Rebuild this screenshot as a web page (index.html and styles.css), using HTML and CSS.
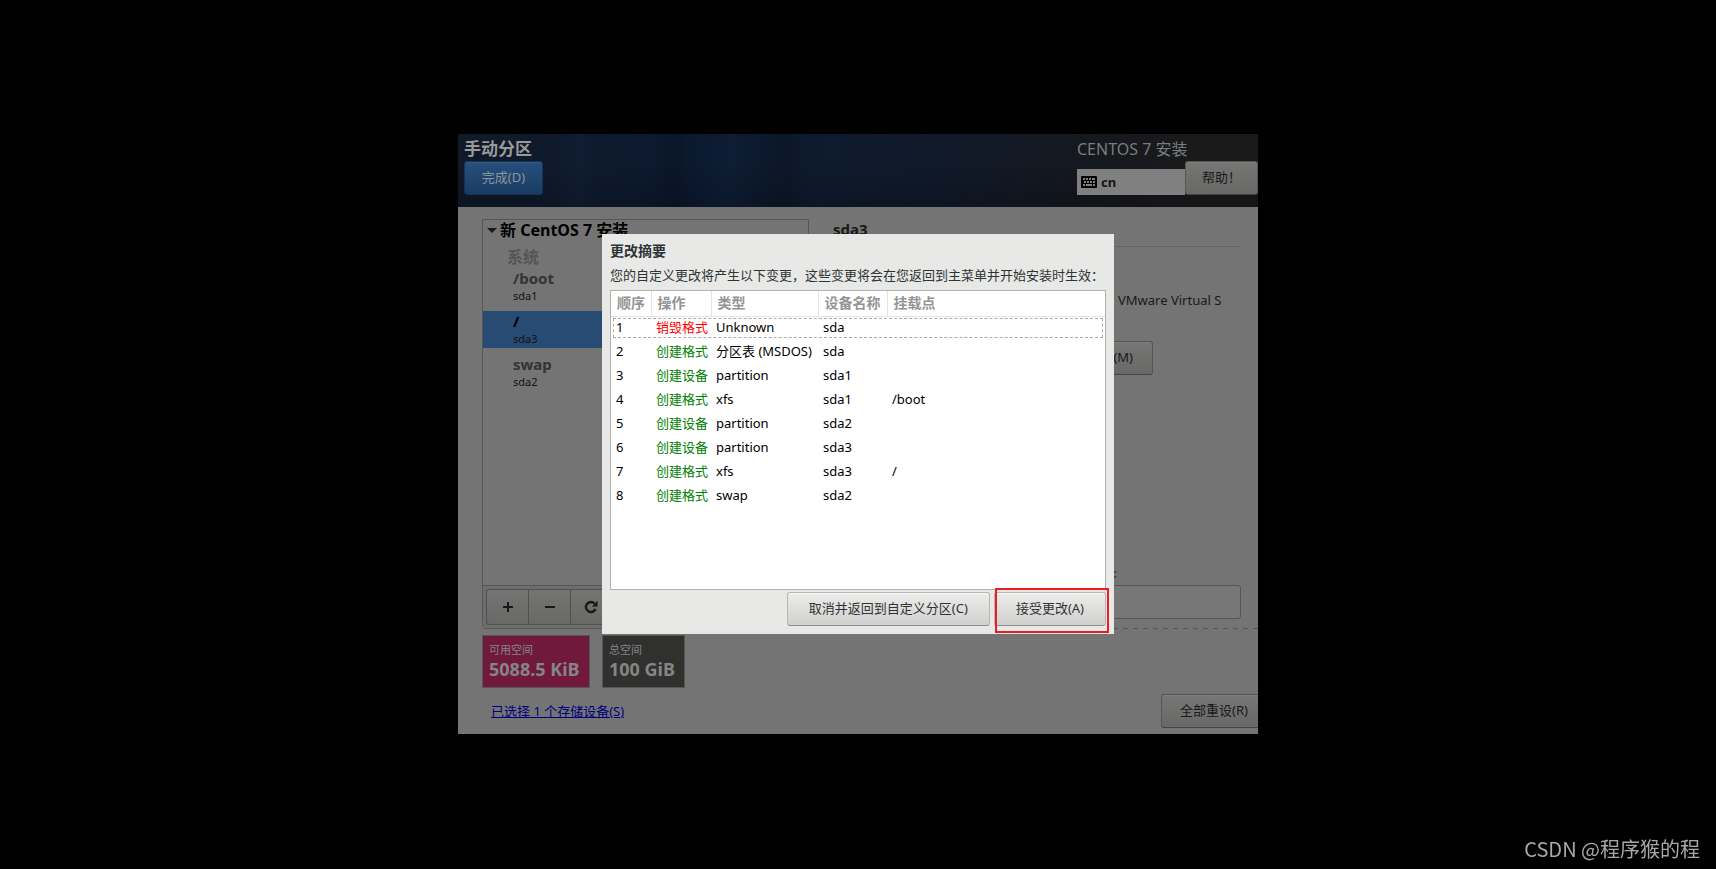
FILE: index.html
```html
<!DOCTYPE html>
<html lang="zh-CN">
<head>
<meta charset="utf-8">
<title>手动分区</title>
<link rel="stylesheet" href="styles.css">
</head>
<body>
<main class="screen">
  <header class="topbar">
    <div class="topbar-left">
      <h1 class="page-title">手动分区</h1>
      <button class="btn btn-primary" type="button">完成(D)</button>
    </div>
    <div class="topbar-right">
      <p class="product">CENTOS 7 安装</p>
      <div class="topbar-tools">
        <button class="layout-indicator" type="button">
          <svg width="16" height="12" viewBox="0 0 16 12" aria-hidden="true">
            <rect width="16" height="12" rx="1" fill="#000"/>
            <path d="M2 3h2M5 3h2M8 3h2M11 3h3M3 6h2M6 6h2M9 6h2M12 6h2M2 9h2M5 9h6M12 9h2" stroke="#808080" stroke-width="2"/>
          </svg>
          cn
        </button>
        <button class="btn btn-help" type="button">帮助！</button>
      </div>
    </div>
  </header>

  <div class="content">
    <div class="columns">
      <section class="mounts">
        <div class="mount-list">
          <h2 class="install-title"><span class="expander"></span>新 CentOS 7 安装</h2>
          <h3 class="group-title">系统</h3>
          <ul class="mount-items">
            <li class="mount"><span class="mount-path">/boot</span><span class="mount-dev">sda1</span></li>
            <li class="mount mount-selected"><span class="mount-path">/</span><span class="mount-dev">sda3</span></li>
            <li class="mount"><span class="mount-path">swap</span><span class="mount-dev">sda2</span></li>
          </ul>
        </div>
        <div class="toolbar">
          <button class="tool" type="button" aria-label="添加"><svg width="12" height="12" viewBox="0 0 12 12"><path d="M6 1v10M1 6h10" stroke="#151818" stroke-width="2"/></svg></button>
          <button class="tool" type="button" aria-label="删除"><svg width="12" height="12" viewBox="0 0 12 12"><path d="M1 6h10" stroke="#151818" stroke-width="2"/></svg></button>
          <button class="tool tool-last" type="button" aria-label="重新载入"><svg width="14" height="14" viewBox="0 0 14 14"><path d="M10.5 3.5A5 5 0 1 0 11.5 9" fill="none" stroke="#151818" stroke-width="2.4"/><path d="M13.5 .8V6.500H7.800z" fill="#151818"/></svg></button>
        </div>
      </section>

      <section class="details">
        <h2 class="detail-title">sda3</h2>
        <p class="device-name">VMware Virtual S</p>
        <button class="btn btn-dim btn-modify" type="button">修改...(M)</button>
        <label class="name-label" for="dev-name">名称(N):</label>
        <input class="name-input" id="dev-name" type="text">
      </section>
    </div>

    <div class="summary">
      <div class="space space-free"><span class="space-label">可用空间</span><strong class="space-value">5088.5 KiB</strong></div>
      <div class="space space-total"><span class="space-label">总空间</span><strong class="space-value">100 GiB</strong></div>
    </div>
    <footer class="footer">
      <a class="storage-link" href="#">已选择 1 个存储设备(S)</a>
      <button class="btn btn-dim btn-reset" type="button">全部重设(R)</button>
    </footer>
  </div>

  <div class="dialog" role="dialog" aria-labelledby="dialog-title">
    <h2 class="dialog-title" id="dialog-title">更改摘要</h2>
    <p class="dialog-text">您的自定义更改将产生以下变更，这些变更将会在您返回到主菜单并开始安装时生效：</p>
    <div class="table-frame">
      <table class="changes">
        <colgroup><col class="c-order"><col class="c-action"><col class="c-type"><col class="c-device"><col></colgroup>
        <thead><tr><th>顺序</th><th>操作</th><th>类型</th><th>设备名称</th><th>挂载点</th></tr></thead>
        <tbody>
          <tr class="focused"><td>1</td><td class="destroy">销毁格式</td><td>Unknown</td><td>sda</td><td></td></tr>
          <tr><td>2</td><td class="create">创建格式</td><td>分区表 (MSDOS)</td><td>sda</td><td></td></tr>
          <tr><td>3</td><td class="create">创建设备</td><td>partition</td><td>sda1</td><td></td></tr>
          <tr><td>4</td><td class="create">创建格式</td><td>xfs</td><td>sda1</td><td>/boot</td></tr>
          <tr><td>5</td><td class="create">创建设备</td><td>partition</td><td>sda2</td><td></td></tr>
          <tr><td>6</td><td class="create">创建设备</td><td>partition</td><td>sda3</td><td></td></tr>
          <tr><td>7</td><td class="create">创建格式</td><td>xfs</td><td>sda3</td><td>/</td></tr>
          <tr><td>8</td><td class="create">创建格式</td><td>swap</td><td>sda2</td><td></td></tr>
        </tbody>
      </table>
    </div>
    <div class="dialog-actions">
      <button class="btn btn-dialog" type="button">取消并返回到自定义分区(C)</button>
      <div class="marked"><button class="btn btn-dialog" type="button">接受更改(A)</button></div>
    </div>
  </div>
</main>
<p class="watermark">CSDN @程序猴的程</p>
</body>
</html>
```
FILE: styles.css
```css
* { box-sizing: border-box; }

body {
  margin: 0;
  padding-bottom: 1px;
  min-height: 100vh;
  display: grid;
  grid-template-columns: minmax(0, 800px);
  place-content: center;
  background: #000;
  color: #2e3436;
  font: 13px/20px "Noto Sans", "Noto Sans CJK SC", sans-serif;
}

h1, h2, h3, p, ul { margin: 0; padding: 0; }
ul { list-style: none; }
button, input { font: inherit; color: inherit; }

.screen {
  position: relative;
  min-height: 600px;
  overflow: hidden;
  display: flex;
  flex-direction: column;
  background: #747474;
}

.btn {
  height: 34px;
  padding: 0 18px 2px;
  border: 1px solid #b6b6b3;
  border-bottom-color: #8f8f8c;
  border-radius: 3px;
  background: linear-gradient(#ececeb, #d0d0ce);
  box-shadow: inset 0 1px #fafafa;
  white-space: nowrap;
}

.btn-dim, .btn-help {
  border-color: #565654;
  border-bottom-color: #444442;
  background: linear-gradient(#767675, #686866);
  box-shadow: inset 0 1px #7d7d7c;
  color: #171a1b;
}

/* Top bar */
.topbar {
  height: 73px;
  padding: 5px 0 0 6px;
  display: flex;
  justify-content: space-between;
  background:
    linear-gradient(90deg, #0000 12%, #16294633 15%, #0000 18% 24%, #00000026 27%, #0000 29%, #1a335522 34%, #0000 37%, #00000022 41%, #0000 44%),
    linear-gradient(#0000 40%, #0003),
    linear-gradient(90deg, #101a28, #0d1a2e 20%, #0b192f 30%, #0e1b2e 45%, #10192a 60%, #141820 75%, #1a1a1a 95%);
}
.page-title {
  height: 22px;
  font-size: 17px;
  line-height: 20px;
  color: #999;
}
.btn-primary {
  width: 79px;
  padding: 0 0 2px;
  border-color: #153453;
  background: linear-gradient(#27507e, #1a3c62);
  box-shadow: inset 0 1px #2f5c8b;
  color: #8e949b;
}
.topbar-right { width: 181px; }
.product {
  height: 22px;
  font-size: 16px;
  line-height: 20px;
  color: #7c7c7c;
}
.topbar-tools { display: flex; align-items: flex-end; }
.layout-indicator {
  flex: 1;
  height: 26px;
  padding: 0 4px;
  display: flex;
  align-items: center;
  gap: 4px;
  border: 0;
  background: #808080;
  color: #151515;
  font-weight: bold;
}
.btn-help { width: 73px; padding: 0 14px 2px; }

/* Content */
.content {
  flex: 1;
  padding: 12px 0 0 24px;
  display: flex;
  flex-direction: column;
}
.columns {
  display: grid;
  grid-template-columns: minmax(0, 327px) minmax(0, 1fr);
  gap: 24px;
}
.mounts {
  min-height: 410px;
  display: flex;
  flex-direction: column;
  border: 1px solid #565654;
  border-radius: 0 0 4px 4px;
}
.mount-list { flex: 1; }
.install-title {
  display: flex;
  align-items: center;
  gap: 3px;
  padding: 0 4px;
  font-size: 16px;
  line-height: 20px;
  color: #000;
}
.expander {
  border: 5px solid transparent;
  border-top-color: #171a1b;
  border-bottom: 0;
}
.group-title {
  padding: 6px 24px 0;
  font-size: 16px;
  line-height: 22px;
  color: #555;
}
.mount {
  height: 37px;
  margin-bottom: 6px;
  padding-left: 30px;
  display: flex;
  flex-direction: column;
  color: #111;
}
.mount-path {
  font-size: 15px;
  line-height: 21px;
  font-weight: bold;
  color: #333;
}
.mount-dev { font-size: 11px; line-height: 14px; }
.mount-selected { background: #274b72; }
.mount-selected .mount-path { color: #000; }

.toolbar {
  display: flex;
  padding: 3px;
  border-top: 1px solid #565654;
  background: #6d6d6c;
}
.tool {
  width: 42px;
  height: 36px;
  padding: 0;
  display: grid;
  place-items: center;
  border: 1px solid #505050;
  border-right: 0;
  background: linear-gradient(#747473, #696967);
}
.tool:first-child { border-radius: 3px 0 0 3px; }
.tool-last { border-right: 1px solid #505050; border-radius: 0 3px 3px 0; }

.details {
  display: flex;
  flex-direction: column;
  padding-bottom: 1px;
  background: repeating-linear-gradient(90deg, #555 0 5px, #0000 5px 10px) bottom / 100% 1px no-repeat;
}
.detail-title {
  height: 28px;
  margin-right: 17px;
  border-bottom: 1px solid #656565;
  font-size: 15px;
  line-height: 20px;
  color: #171a1b;
}
.device-name {
  padding: 43px 0 31px 285px;
  line-height: 20px;
  color: #171a1b;
  white-space: nowrap;
}
.btn-modify { width: 96px; margin-left: 224px; }
.name-label {
  margin-top: auto;
  width: 190px;
  text-align: right;
  align-self: flex-start;
  margin-left: 94px;
  padding-bottom: 2px;
  font-weight: bold;
  color: #444;
}
.name-input {
  height: 34px;
  margin: 0 17px 9px 96px;
  border: 1px solid #565654;
  border-radius: 3px;
  background: #777;
}

.summary { display: flex; gap: 12px; padding-top: 6px; }
.space {
  height: 53px;
  padding: 5px 6px;
  display: flex;
  flex-direction: column;
  border: 1px solid #565654;
  color: #858585;
}
.space-free { min-width: 108px; background: #70193d; }
.space-total { min-width: 83px; background: #30302e; }
.space-label { font-size: 11px; line-height: 18px; }
.space-value { font-size: 18px; line-height: 20px; }

.footer {
  display: flex;
  align-items: center;
  justify-content: space-between;
  padding: 6px 0 6px 9px;
}
.storage-link { color: #00007f; }
.btn-reset { margin-right: -9px; color: #171a1b; }

/* Dialog */
.dialog {
  position: absolute;
  top: 50%;
  left: 50%;
  transform: translate(-50%, -50%);
  width: 512px;
  max-width: 100%;
  padding: 7px 8px 8px;
  background: #e8e8e7;
}
.dialog-title { font-size: 14px; line-height: 20px; }
.dialog-text { padding: 4px 0 5px; white-space: nowrap; }
.table-frame {
  min-height: 300px;
  border: 1px solid #b0b0ad;
  background: #fff;
}
.changes {
  width: 100%;
  table-layout: fixed;
  border-collapse: collapse;
  color: #000;
}
.c-order { width: 40px; }
.c-action { width: 60px; }
.c-type { width: 107px; }
.c-device { width: 69px; }
.changes th {
  height: 25px;
  padding: 0 0 0 6px;
  border-right: 1px solid #e3e3e3;
  border-bottom: 1px solid #e3e3e3;
  text-align: left;
  font-size: 14px;
  line-height: 20px;
  color: #929595;
}
.changes th:last-child { border-right: 0; }
.changes td {
  height: 24px;
  padding: 0 0 2px 5px;
  line-height: 20px;
  white-space: nowrap;
}
.focused { outline: 1px dashed #aaa; outline-offset: -3px; }
.changes .destroy { color: #f00; }
.changes .create { color: #008000; }
.dialog-actions {
  display: flex;
  justify-content: flex-end;
  gap: 4px;
  padding-top: 2px;
}
.btn-dialog { padding: 0 21px 2px; }
.marked { position: relative; }
.marked::after {
  content: "";
  position: absolute;
  inset: -4px -3px -7px 1px;
  border: 2px solid #ed1c24;
  pointer-events: none;
}

.watermark {
  position: fixed;
  right: 16px;
  bottom: 8px;
  font: 20px/24px "Noto Sans CJK SC", sans-serif;
  color: #a8a8a8;
}
```
